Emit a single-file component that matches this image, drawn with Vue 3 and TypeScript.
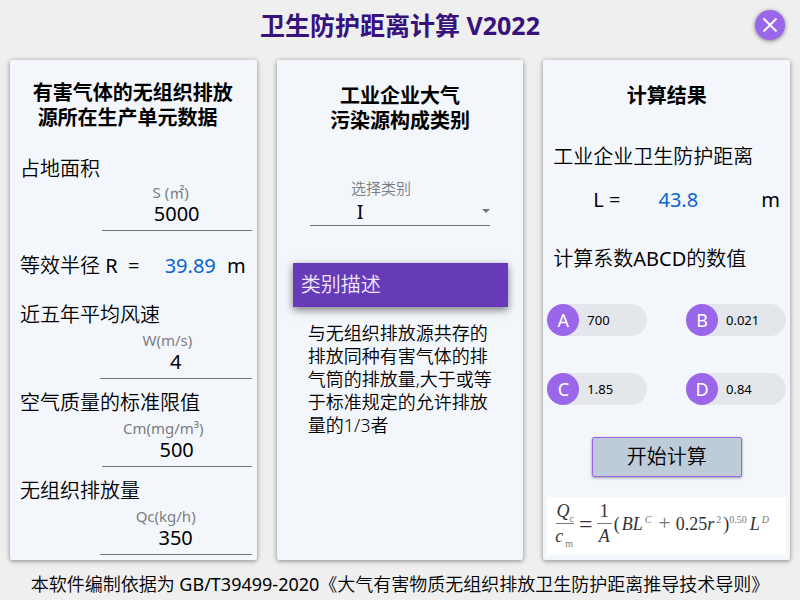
<script setup lang="ts">
import { computed, ref } from 'vue'

interface Coefficient {
  name: string
  value: string
}

const area = ref('5000')
const wind = ref('4')
const limit = ref('500')
const emission = ref('350')
const category = ref('I')
const distance = ref('43.8')

const radius = computed(() => Math.sqrt(Number(area.value) / Math.PI).toFixed(2))

const descriptions: Record<string, string> = {
  I: '与无组织排放源共存的排放同种有害气体的排气筒的排放量,大于或等于标准规定的允许排放量的1/3者',
}

const coefficients: Coefficient[] = [
  { name: 'A', value: '700' },
  { name: 'B', value: '0.021' },
  { name: 'C', value: '1.85' },
  { name: 'D', value: '0.84' },
]
</script>

<template>
  <div class="window">
    <header class="titlebar">
      <h1>卫生防护距离计算 V2022</h1>
      <button class="close" type="button" aria-label="关闭">
        <svg viewBox="0 0 30 30" width="30" height="30" aria-hidden="true">
          <path d="M8.5 8.5 21.5 21.5M21.5 8.5 8.5 21.5" fill="none" stroke="#fff" stroke-width="2" />
        </svg>
      </button>
    </header>

    <main class="columns">
      <section class="card inputs">
        <h2>有害气体的无组织排放<br />源所在生产单元数据&nbsp;&nbsp;</h2>

        <div class="group first">
          <label class="label" for="area">占地面积</label>
          <label class="field">
            <span class="hint"><span>S (㎡)</span></span>
            <input id="area" v-model="area" type="text" />
          </label>
        </div>

        <p class="radius">
          <span><span class="label">等效半径</span> R&nbsp; =</span>
          <output class="value">{{ radius }}</output>
          <span>m</span>
        </p>

        <div class="group">
          <label class="label" for="wind">近五年平均风速</label>
          <label class="field wide">
            <span class="hint"><span>W(m/s)</span></span>
            <input id="wind" v-model="wind" type="text" />
          </label>
        </div>
        <div class="group">
          <label class="label" for="limit">空气质量的标准限值</label>
          <label class="field">
            <span class="hint"><span>Cm(mg/m³)</span></span>
            <input id="limit" v-model="limit" type="text" />
          </label>
        </div>
        <div class="group">
          <label class="label" for="emission">无组织排放量</label>
          <label class="field wide">
            <span class="hint"><span>Qc(kg/h)</span></span>
            <input id="emission" v-model="emission" type="text" />
          </label>
        </div>
      </section>

      <section class="card category">
        <h2>工业企业大气<br />污染源构成类别</h2>
        <label class="picker">
          <span class="hint light"><span>选择类别</span></span>
          <span class="select">
            <select v-model="category">
              <option value="I">I</option>
            </select>
            <svg class="arrow" viewBox="0 0 8 6" width="8" height="6" aria-hidden="true">
              <path d="M0 0h8L4 4z" fill="#747679" />
            </svg>
          </span>
        </label>
        <h3>类别描述</h3>
        <p class="description">{{ descriptions[category] }}</p>
      </section>

      <section class="card results">
        <h2>计算结果</h2>
        <p class="label">工业企业卫生防护距离</p>
        <p class="distance">
          <span>L =</span>
          <output class="value">{{ distance }}</output>
          <span class="unit">m</span>
        </p>
        <p class="label">计算系数<span class="latin">ABCD</span>的数值</p>
        <ul class="chips">
          <li v-for="c in coefficients" :key="c.name" class="chip">
            <span class="badge">{{ c.name }}</span>
            <span>{{ c.value }}</span>
          </li>
        </ul>
        <button class="run" type="button">开始计算</button>
        <div class="formula">
          <span class="fraction">
            <span class="top"><i>Q</i><sub>c</sub></span>
            <span class="bottom"><i>c</i><sub class="spaced">m</sub></span>
          </span>
          <span class="sign">=</span>
          <span class="fraction">
            <span class="top narrow">1</span>
            <span class="bottom"><i>A</i></span>
          </span>
          <span class="rest"><span class="paren">(</span><i>BL</i><sup class="spaced"><i>C</i></sup><span class="plus">+</span>0.25<i>r</i><sup class="spaced">2</sup>)<sup class="power">0.50</sup><i>L</i><sup class="spaced"><i>D</i></sup></span>
        </div>
      </section>
    </main>

    <footer>本软件编制依据为 <span class="latin">GB/T39499-2020</span>《大气有害物质无组织排放卫生防护距离推导技术导则》</footer>
  </div>
</template>

<style>
body {
  margin: 0;
  background: #efefef;
}
</style>

<style scoped>
* {
  box-sizing: border-box;
}

.window {
  display: flex;
  flex-direction: column;
  min-height: 100vh;
  background: #efefef;
  color: #000;
  font: 400 20px/28px 'Noto Sans', 'Noto Sans CJK SC', sans-serif;
}

h1,
h2,
h3,
p,
ul {
  margin: 0;
  padding: 0;
}

button,
input,
select {
  color: inherit;
  font: inherit;
}

.label,
.light,
h3,
.description,
.run,
footer {
  font-weight: 350;
}

.latin {
  font-weight: 400;
}

.titlebar {
  display: grid;
  grid-template-columns: 30px 1fr 30px;
  align-items: center;
  height: 60px;
  padding: 0 15px 10px;
}

h1 {
  grid-column: 2;
  color: #37117d;
  font-size: 25px;
  font-weight: 700;
  line-height: 36px;
  text-align: center;
}

.close {
  display: block;
  width: 30px;
  height: 30px;
  padding: 0;
  border: 0;
  border-radius: 50%;
  background: #9b67ea;
  box-shadow: 0 1px 4px rgba(0, 0, 0, 0.5);
}

.close svg {
  display: block;
}

.columns {
  display: grid;
  flex: 1;
  grid-template-columns: repeat(3, minmax(0, 1fr));
  gap: 20px;
  padding: 0 10px;
}

.card {
  display: flex;
  flex-direction: column;
  border-radius: 2px;
  background: #f3f7fc;
  box-shadow: 0 1px 5px rgba(0, 0, 0, 0.45);
}

h2 {
  font-size: 20px;
  font-weight: 700;
  line-height: 25px;
  text-align: center;
}

.value {
  color: #0864d0;
}

.inputs {
  padding: 20px 5px 4px 10px;
}

.inputs h2 {
  padding-right: 6px;
}

.group {
  display: flex;
  flex-direction: column;
  margin-bottom: 10px;
}

.group:last-child {
  margin-bottom: 0;
}

.group .field {
  margin-top: 2px;
}

.group.first {
  margin: 25px 0 21px;
}

.group.first .field {
  margin-top: 0;
}

.field {
  display: flex;
  flex-direction: column;
  align-items: center;
  align-self: flex-end;
  width: 150px;
  border-bottom: 1px solid #747679;
}

.field.wide {
  width: 152px;
}

/* The floating caption takes three quarters of the width reserved for it. */
.hint {
  display: inline-grid;
  grid-template-columns: 3fr 1fr;
  color: #7b7d80;
  font-size: 15px;
  line-height: 19px;
  white-space: nowrap;
}

.field input {
  width: 100%;
  height: 28px;
  padding: 0 0 4px;
  border: 0;
  outline: 0;
  background: transparent;
  text-align: center;
}

.radius {
  display: flex;
  justify-content: space-between;
  margin-bottom: 21px;
  padding-right: 6px;
}

.radius .value {
  margin-left: 14px;
}

.category {
  padding-top: 23px;
}

.picker {
  display: flex;
  flex-direction: column;
  align-items: center;
  margin: 46px 33px 0;
  border-bottom: 1px solid #747679;
}

.picker .hint {
  margin-right: 18px;
}

.select {
  display: flex;
  align-items: center;
  align-self: stretch;
}

select {
  flex: 1;
  height: 27px;
  padding: 0 0 2px 47px;
  border: 0;
  outline: 0;
  appearance: none;
  background: transparent;
}

.arrow {
  display: block;
}

h3 {
  margin: 37px 15px 0 16px;
  padding: 8px;
  background: #673ab7;
  box-shadow: 0 3px 8px rgba(0, 0, 0, 0.5);
  color: #efe9fa;
  font-size: 20px;
}

.description {
  margin: 15px 24px 0 31px;
  font-size: 18px;
  line-height: 23px;
}

.results {
  padding: 23px 4px 5px;
}

p.label {
  padding-left: 6px;
}

.results h2 {
  margin-bottom: 35px;
}

.distance {
  display: flex;
  margin: 15px 0 31px;
  padding: 0 6px 0 46px;
}

.distance .value {
  margin-left: 38px;
}

.distance .unit {
  margin-left: auto;
}

.chips {
  display: grid;
  grid-template-columns: 100px 100px;
  row-gap: 37px;
  justify-content: space-between;
  margin-top: 31px;
  list-style: none;
}

.chip {
  display: flex;
  align-items: center;
  gap: 8px;
  height: 32px;
  border-radius: 16px;
  background: #e3e6eb;
  font-size: 13px;
}

.badge {
  width: 32px;
  height: 32px;
  border-radius: 50%;
  background: #9b67ea;
  color: #fff;
  font-size: 18px;
  line-height: 32px;
  text-align: center;
}

.run {
  align-self: center;
  width: 150px;
  height: 40px;
  margin: 32px 0 20px;
  padding: 0;
  border: 1px solid #9b67ea;
  border-radius: 2px;
  background: #becbd9;
  box-shadow: 0 1px 3px rgba(0, 0, 0, 0.4);
}

.formula {
  display: flex;
  align-items: center;
  height: 58px;
  padding: 0 0 5px 8px;
  background: #fff;
  color: #333;
  font: 400 18px/24px 'Liberation Serif', serif;
  white-space: nowrap;
}

.fraction {
  display: flex;
  flex-direction: column;
  align-items: center;
}

.fraction .top {
  border-bottom: 1px solid #777;
}

.fraction .narrow {
  padding: 0 3px;
}

.formula sub,
.formula sup {
  color: #777;
  font-size: 10px;
  line-height: 0;
}

.sign {
  margin: 0 4px;
  font-size: 24px;
}

.plus {
  margin: 0 5px;
  color: #777;
  font-size: 22px;
}

.paren {
  margin: 0 2px;
}

.spaced {
  margin: 0 2px;
}

.power {
  margin-right: 3px;
}

footer {
  padding: 10px 0 2px;
  font-size: 18px;
  text-align: center;
  white-space: nowrap;
}
</style>
